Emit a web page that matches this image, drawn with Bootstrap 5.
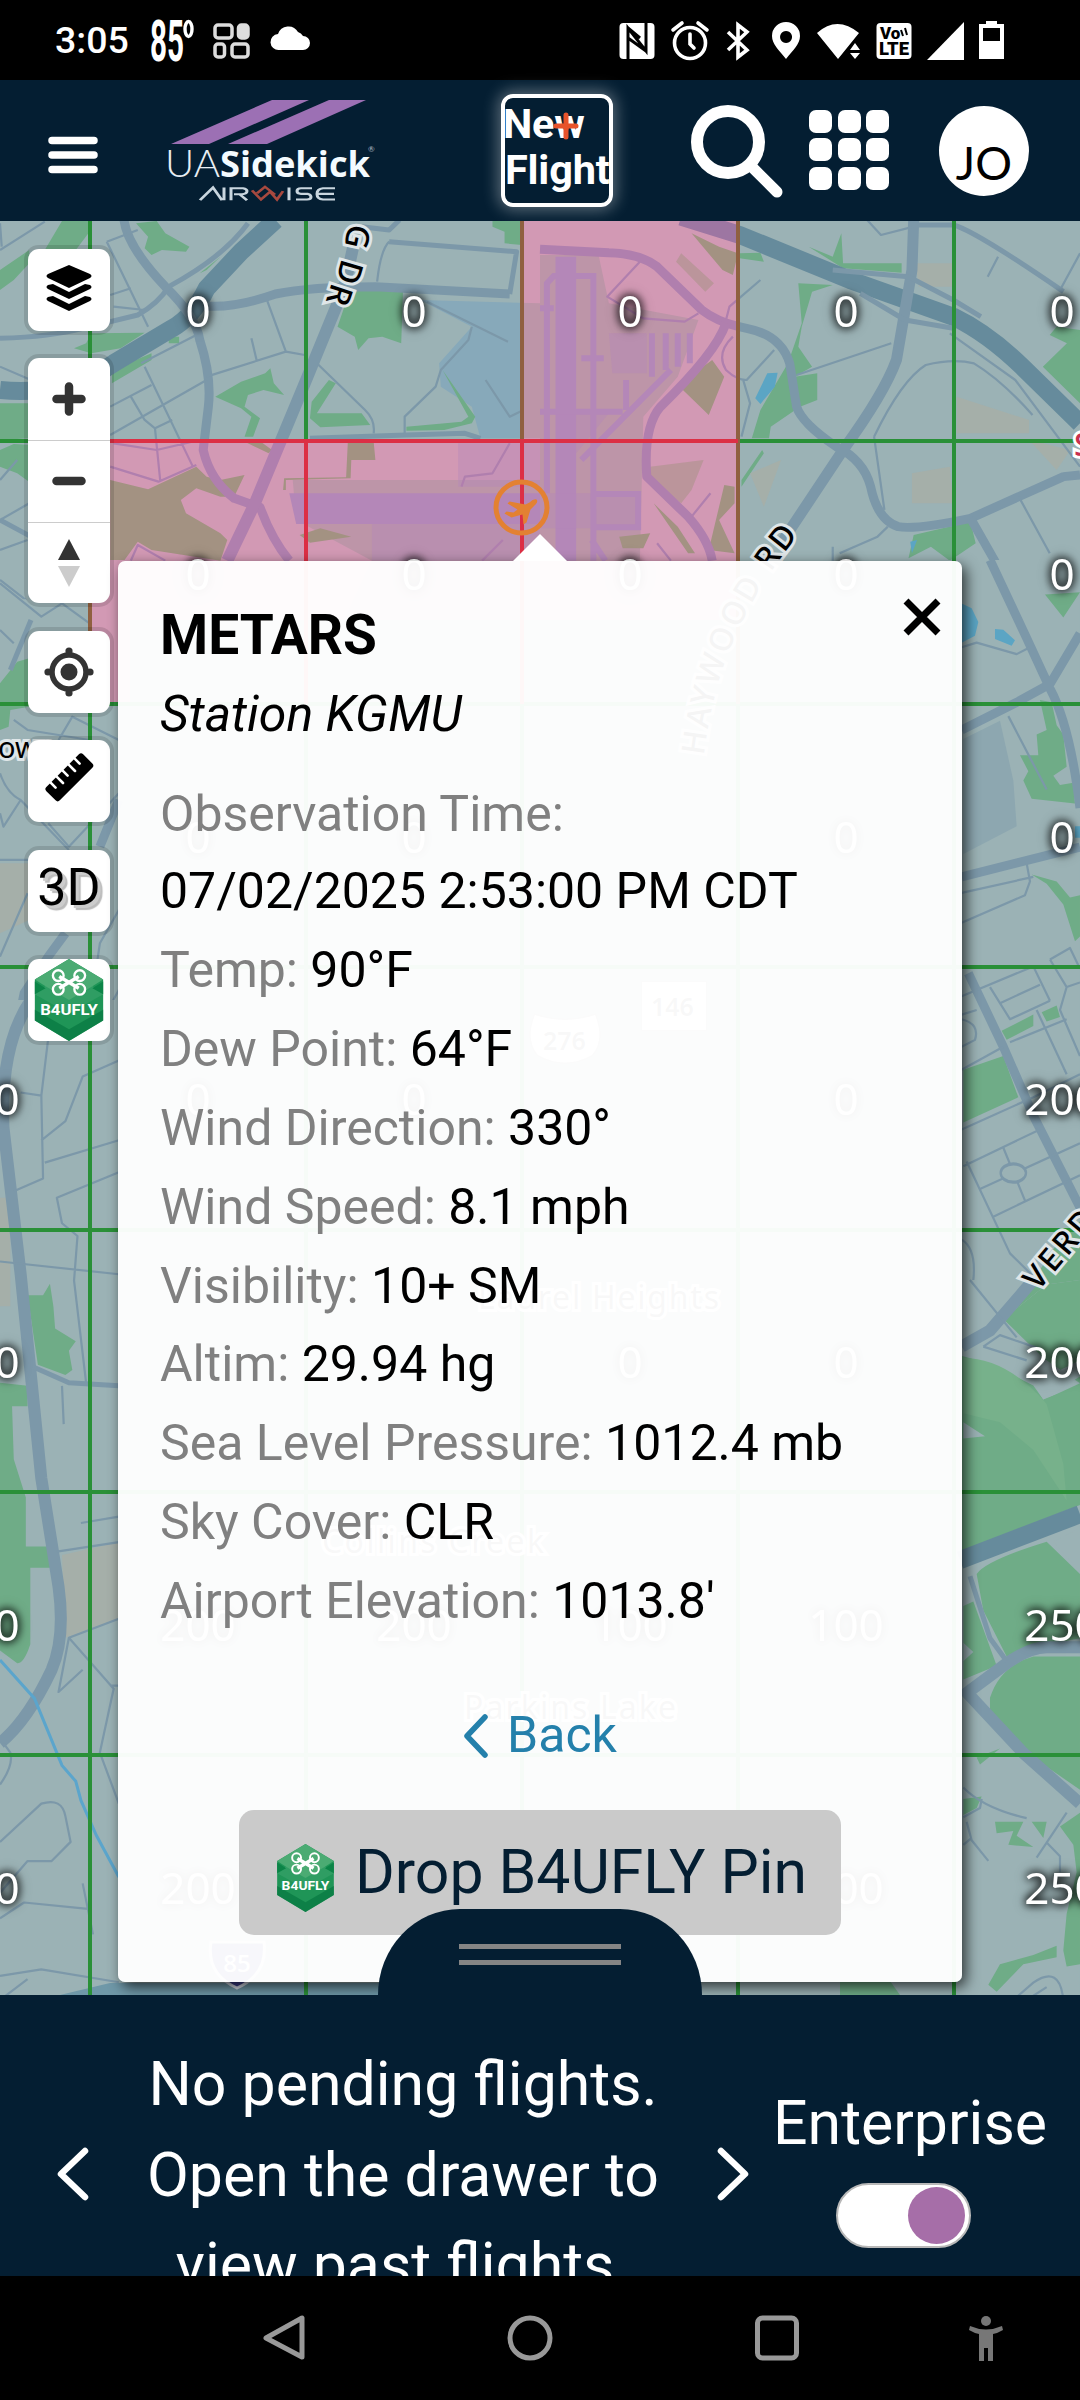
<!DOCTYPE html>
<html lang="en">
<head>
    <meta charset="UTF-8">
    <meta name="viewport" content="width=device-width, initial-scale=1.0">
    <title>UASidekick</title>
    <link href="https://cdn.jsdelivr.net/npm/bootstrap@5.3.0/dist/css/bootstrap.min.css" rel="stylesheet">
    <style>
        body {
            width: 1080px;
            height: 2400px;
            overflow: hidden;
            font-family: Roboto, sans-serif;
            background: #000;
            color: #000;
        }

        svg { display: block; flex: none; }

        /* phone bars */
        .status-bar { height: 80px; padding: 0 76px 0 55px; color: #fff; }
        .clock { font-size: 37.5px; font-weight: 500; line-height: 82px; width: 96px; }
        .phone-nav { height: 124px; }

        /* app header */
        .app-header { height: 141px; background: #041e32; padding-left: 48px; }
        .logo { margin-left: 70px; }
        .new-flight {
            width: 112px;
            height: 113px;
            margin: 0 0 0 126px;
            padding-top: 3px;
            border: 4px solid #fff;
            border-radius: 12px;
            box-shadow: 0 0 16px 3px rgba(255, 255, 255, .35);
            color: #fff;
            font-size: 41.5px;
            font-weight: 700;
            line-height: 46px;
            letter-spacing: -.2px;
            text-indent: -2px;
            white-space: nowrap;
        }
        .new-flight svg { left: 48px; top: 14px; }
        .search-icon { margin-left: 78px; }
        .apps-icon { margin-left: 25px; }
        .avatar {
            width: 90px;
            height: 90px;
            margin-left: 49px;
            background: #fff;
            font-family: Lato, sans-serif;
            font-size: 46px;
            line-height: 114px;
            text-align: center;
        }

        /* map */
        .map-area { height: 1774px; padding-left: 28px; background: #9bb2b5; }
        .map-canvas { left: 0; top: 0; }
        .map-path path, .map-canvas path { vector-effect: non-scaling-stroke; }
        .tone-green { --land: #9bb2b5; --road: #7c98a9; --hwy: #668b9c; --park: #6fac87; --field: #87a9ba; --runway: #87a9ba; }
        .tone-pink { --land: #d299b4; --road: #b07fae; --hwy: #9d76a2; --park: #a39282; --field: #bd95a8; --runway: #b487b8; }
        .land { fill: var(--land); }
        .park { fill: var(--park); }
        .field { fill: var(--field); }
        .runway { fill: var(--runway); }
        .taxi { fill: none; stroke: var(--runway); stroke-width: 6; }
        .hwy, .road, .street, .lane { fill: none; stroke: var(--road); stroke-linejoin: round; }
        .hwy { stroke: var(--hwy); stroke-width: 18; }
        .road { stroke-width: 9; }
        .street { stroke-width: 5; }
        .lane { stroke-width: 2.2; }
        .water { fill: #5ba5c4; }
        .creek { fill: none; stroke: #5ba5cc; stroke-width: 3; }
        .blush { fill: #a9aea4; opacity: .7; }
        .grid-green { fill: none; stroke: #2a9038; stroke-width: 4; }
        .grid-red { fill: none; stroke: #dc2f45; stroke-width: 4; }
        .grid-edge { fill: none; stroke: #8f6040; stroke-width: 4; }
        .alt-num {
            font: 44px "Noto Sans", sans-serif;
            fill: #fff;
            text-anchor: middle;
            filter: drop-shadow(0 0 4px rgba(0, 0, 0, .8)) drop-shadow(0 0 4px rgba(0, 0, 0, .8));
        }
        .place {
            font-family: "Noto Sans", sans-serif;
            font-size: 32px;
            font-weight: 500;
            fill: #000;
            stroke: #dfe6e8;
            stroke-width: 6;
            paint-order: stroke;
        }
        .place-town { font-weight: 400; fill: #555; stroke: #fff; }

        /* map tools */
        .tools { width: 82px; padding-top: 28px; gap: 27.7px; }
        .tool-box {
            height: 81.7px;
            background: #fff;
            border-radius: 11px;
            box-shadow: 0 0 0 4px rgba(0, 0, 0, .12);
        }
        .tool-zoom { height: 245px; }
        .tool-zoom > div { height: 81.7px; }
        .tool-zoom > div + div { border-top: 1.5px solid #ccc; }
        .label-3d { font-size: 52px; line-height: 76px; text-shadow: 3px 3px 0 #ccc, 5px 5px 1px #bbb; }

        /* station popup */
        .popup {
            width: 844px;
            height: 1421px;
            margin: 340px 0 0 8px;
            padding: 41px 42px 0;
            background: rgba(255, 255, 255, .96);
            border-radius: 7px;
            box-shadow: 4px 5px 14px rgba(0, 0, 0, .7);
        }
        .popup-tip { left: 395px; top: -27px; }
        .popup-close { right: 21px; top: 36px; }
        .popup h1 { font-size: 55px; font-weight: 700; line-height: 66px; margin: 0 0 7px; }
        .station { font-size: 50px; line-height: 79px; font-style: italic; margin-bottom: 23px; }
        .reading { font-size: 50px; line-height: 78.9px; white-space: nowrap; }
        .reading-label { color: #808080; }
        .reading-first { line-height: 75px; }
        .back-link { margin-top: 55px; font-size: 50px; line-height: 79px; color: #2480ab; gap: 18px; }
        .pin-btn {
            width: 602px;
            height: 125px;
            margin-top: 35px;
            padding: 0 0 0 37px;
            background: #cacaca;
            border-radius: 15px;
            font-size: 60.7px;
            color: #041e32;
            gap: 20px;
            white-space: nowrap;
        }
        .pin-btn svg { margin-top: 10px; }

        /* bottom drawer */
        .drawer { height: 281px; background: #041e32; color: #fff; font-size: 60.8px; }
        .drawer-tab {
            left: 378px;
            top: -86px;
            width: 324px;
            height: 90px;
            background: #041e32;
            border-radius: 82px 82px 0 0 / 86px 86px 0 0;
            padding-top: 35px;
            gap: 11px;
        }
        .drawer-tab div { width: 162px; height: 5px; background: #858585; }
        .drawer-msg { width: 560px; margin-left: 34px; padding-top: 45px; line-height: 90.7px; text-align: center; }
        .drawer-arrow { padding-top: 152px; width: 32px; }
        .arrow-left { margin-left: 57px; }
        .arrow-right { margin-left: 34px; }
        .mode { width: 270px; padding-top: 93px; margin-left: 26px; line-height: 72px; }
        .toggle {
            width: 135px;
            height: 65px;
            margin: 23px 13px 0 0;
            background: #fff;
            border: 2px solid #b8b8b8;
            border-radius: 33px;
            padding-right: 4px;
        }
        .toggle div { width: 57px; height: 57px; background: #a66ea8; }
    </style>
</head>
<body>

    <!-- shared drawings -->
    <svg width="0" height="0" class="map-path position-absolute">
        <defs>
            <symbol id="b4ufly" viewBox="0 0 72 84">
                <path fill="#1f9557" d="M36 0 71 21V63L36 84 1 63V21z"/>
                <path fill="#4bab73" d="M36 0 71 21 60 28 71 36 36 50 1 36 12 28 1 21z"/>
                <path fill="#2f9d63" d="M1 36 12 28 36 42 60 28 71 36 36 56z"/>
                <path fill="#087a41" d="M1 52 36 72 71 52V63L36 84 1 63z" opacity=".75"/>
                <path fill="#0b8447" d="M1 23 12 30 1 36zM71 23 60 30 71 36z"/>
                <g fill="none" stroke="#fff" stroke-width="2.4">
                    <circle cx="25" cy="17" r="5.5"/><circle cx="47" cy="17" r="5.5"/>
                    <circle cx="25" cy="31" r="5.5"/><circle cx="47" cy="31" r="5.5"/>
                    <path stroke-width="3.5" d="M26 18 46 30M46 18 26 30"/>
                </g>
                <text x="36" y="57" text-anchor="middle" textLength="59" lengthAdjust="spacingAndGlyphs" font-family="Roboto" font-weight="700" font-size="15" fill="#fff">B4UFLY</text>
            </symbol>

            <g id="tile-west">
                <path class="land" d="M0 0H1568V1200H0z"/>
                <path class="field" d="M1220 240 1568 250V655H1395L1370 560 1280 500 1275 430 1370 320zM850 780H1568V1200H1000L1080 1022 860 900z"/>
                <path class="runway" d="M840 820H1568V912H860z"/>
                <path class="runway" opacity=".4" d="M1330 670H1568V800H1330zM1080 912H1568V1022H1080z"/>
                <path class="park" d="M180 3H260V35L220 90H130zM395 10 455 3 480 40 550 80 540 95 470 90 440 105 420 85 430 50zM0 150 85 90V130L40 180 0 210zM0 550H85V655L0 660zM0 690 40 672 90 675V790L50 760 0 740zM265 340 420 338 350 385 265 400 215 385 250 370zM325 450 440 400V420L325 490zM1040 210 1170 215 1165 370 1110 350 1070 355 1040 390 1030 350 980 320 1000 260zM625 530 700 485 770 460 785 445 795 490 825 525 765 510 720 525 710 560 755 595 735 650H710L730 590 700 565zM905 545 955 480 975 490 920 580H1050L1075 615 930 622 900 595zM1285 450 1380 590 1370 610 1290 630 1180 632V620L1340 605 1360 590zM1430 3H1515V75L1465 70V35L1430 20zM580 160 640 110 600 150zM490 350H520V370H490z"/>
                <path class="park" d="M320 780 430 808 570 740 600 770 640 780 710 765 680 830H640L570 805 525 840 540 880 640 940 660 960 640 1022 440 990 400 965 360 1022H320zM1010 665H1085L1090 720H1020L1018 775 830 780V810H822L825 775 1005 772zM870 945 930 925 1020 950 900 968zM700 660H750L790 690 780 700z"/>
                <path class="hwy" d="M0 510Q90 520 180 500 260 480 330 430L500 325Q560 290 600 205L700 95 800 0"/>
                <path class="road" d="M360 0Q370 80 480 200 570 290 580 360 615 470 605 560L590 690Q610 780 680 835L755 862Q790 960 840 1022"/>
                <path class="road" d="M600 258Q680 265 800 222 900 200 1090 200L1480 222"/>
                <path class="road" style="stroke-width:12" d="M1030 60 1000 200Q940 350 885 490L740 850 660 1022"/>
                <path class="street" d="M0 355Q150 350 240 325L400 285Q460 250 490 200 650 110 720 10M1480 222 1500 95 1130 65M1050 20 1130 30 1160 0M0 900 90 950M900 655 1180 645 1350 640 1395 655"/>
                <path class="lane" d="M1130 65Q1105 90 1095 185M0 90 130 5M310 65 430 320M310 65 400 30M600 470 830 395 885 405M830 395 775 240M320 225 380 205M330 260 420 270M320 560 440 495M320 645 600 480M420 440 560 740M410 430 570 345M380 530 420 600 450 625 500 600M330 670 455 690 580 660M450 625 465 780M320 740 460 785 570 735M730 355 745 420M920 430 1060 570Q1090 600 1085 640M1240 245 1475 365M1370 320 1360 360 1280 450 1265 500 1175 590V640M1410 480 1480 590 1520 570M0 440 90 480M0 10 5 80M0 780 50 720M0 900 85 850M0 990 80 960M0 1080 100 1160 185 1150 260 1190M0 1200 90 1150M380 1022 400 975 480 1022M1340 800 1350 770 1430 760 1480 670M1400 1022 1460 960"/>
            </g>

            <g id="tile-east">
                <path class="land" d="M0 0H1568V1200H0z"/>
                <path class="field" d="M0 105 170 105 200 250 460 300 400 470 300 590 290 1022H0z"/>
                <path class="runway" d="M45 110H105V1022H45z"/>
                <path class="runway" opacity=".45" d="M200 340H310V460H210zM0 820H290V925H0zM105 580H200L105 700z"/>
                <path class="taxi" d="M20 600V190L40 168H155V1022M20 600V820M325 340V470M365 340V450M400 340V440M435 340V430M120 415H185M0 265H40M0 575H240M250 480V570M380 450 120 720M150 960 190 1022M155 822H285V922H155"/>
                <path class="park" d="M400 495 500 420 535 470 490 585zM440 40 520 80 575 100 560 165 530 150zM535 795 565 800V850L520 900 565 1000 490 990zM230 950 320 940 300 985H240zM330 850 400 920 450 1000 430 1000z"/>
                <path class="park" opacity=".5" d="M320 740 475 720 440 810 410 850 310 775zM410 100 505 190 480 215 395 125z"/>
                <path class="park" d="M580 100 640 98 650 125 580 115zM780 80 850 110 875 40 880 130 1050 130V158L880 145zM750 190 850 195 790 215 760 320 750 380 790 440 740 470 805 460V540L755 560 670 620 665 655H615L640 570 720 430 760 310zM1460 440 1530 370 1480 345 1500 320 1568 330V550zM1085 945 1250 905 1265 970 1190 1022 1135 980 1070 1015zM585 780 645 690 650 700 585 800zM1465 1120 1568 1110 1520 1190z"/>
                <path class="water" d="M625 535 660 460 690 458 682 500 640 552zM1075 965 1095 960 1080 1000zM1230 1150 1280 1200H1230z"/>
                <path class="blush" d="M1090 130H1200V200H1100zM1210 530 1300 560 1420 600V640H1210zM1080 760 1190 740 1200 850 1080 850zM610 760 700 720 650 860zM1420 660 1540 690 1500 750z"/>
                <path class="hwy" d="M410 -10 580 45 900 180 1200 290Q1300 340 1400 440L1568 610"/>
                <path class="road" d="M0 88 200 98Q290 100 340 140L470 270Q520 310 600 325 700 345 725 430L745 560Q760 610 860 680 940 720 960 800 980 900 1040 920 1090 930 1250 895L1520 770 1568 765"/>
                <path class="road" style="stroke-width:11" d="M1085 0 1080 150 1035 420Q1000 520 880 690L700 970"/>
                <path class="road" d="M540 310Q510 400 350 560 300 620 310 770L430 890Q490 960 500 1022M1250 895 1330 1040 1400 1200"/>
                <path class="street" d="M1085 15H1200Q1260 30 1520 215M850 150 1070 170 1200 240 1280 290M930 220 1060 300 1200 325"/>
                <path class="lane" d="M950 0 990 45 1085 20M970 650Q1050 480 1120 435 1200 415 1260 430 1340 480 1430 585M970 650 1000 870M1190 340 1380 480 1568 740M745 465 1020 370M540 300 550 260 640 180M290 125 195 230 300 295 420 305 460 280M560 350Q510 400 540 450 570 480 600 480L680 390M590 480 610 550 585 650M1330 110 1300 170M1568 100 1510 210M1390 830 1480 1000M850 980V1022M870 1000 980 950 1010 920M495 820 440 890M340 970 380 1022"/>
            </g>

            <clipPath id="pink-clip"><path d="M522 0H738V484H90V221H522z"/></clipPath>
        </defs>
    </svg>

    <div class="status-bar d-flex align-items-center">
        <div class="clock">3:05</div>
        <svg width="252" height="80" viewBox="151 0 252 80">
            <text x="150" y="61" textLength="34" lengthAdjust="spacingAndGlyphs" font-family="Roboto" font-weight="700" font-size="57" fill="#fff">85</text>
            <ellipse cx="188.500" cy="29" rx="3.500" ry="7.500" fill="none" stroke="#fff" stroke-width="3.400"/>
            <g fill="none" stroke="#ddd" stroke-width="3.500">
                <rect x="215" y="25" width="17" height="13" rx="3"/>
                <rect x="238.500" y="25" width="9.500" height="13" rx="3" fill="#ddd"/>
                <rect x="215" y="44" width="9.500" height="13" rx="3"/>
                <rect x="232" y="44" width="16" height="13" rx="3"/>
            </g>
            <path fill="#fff" d="M279 50a8 8 0 0 1-1-16 11 11 0 0 1 20-2 9 9 0 0 1 5 4 7 7 0 0 1 0 14z"/>
        </svg>
        <svg class="ms-auto" width="386" height="80" viewBox="618 0 386 80" fill="#fff">
            <rect x="619.500" y="23" width="35" height="36" rx="4"/>
            <path fill="none" stroke="#000" stroke-width="3" d="M628 60V28L646 51V23M628 38 646 51M628 28 640 38"/>
            <g fill="none" stroke="#fff" stroke-width="3.600" stroke-linecap="round">
                <circle cx="690" cy="43" r="15.500"/>
                <path d="M690 34V44L694 48M673 30 682 23M698 23 707 30"/>
                <path stroke-linecap="butt" d="M728 32 747 50 738 57V25L747 32 728 50"/>
            </g>
            <path fill-rule="evenodd" d="M786 59C779 50 772 44 772 36a14 14 0 0 1 28 0c0 8-7 14-14 23zM786 31a6 6 0 1 0 .1 0z"/>
            <path d="M817 33Q837 15 859 33L838 59zM850 50 855 43 860 50zM850 53H860L855 59z"/>
            <rect x="876.500" y="23" width="35" height="36" rx="4"/>
            <text x="880" y="39" font-family="Roboto" font-weight="900" font-size="17" fill="#000">Vo</text>
            <text x="879" y="55" font-family="Roboto" font-weight="900" font-size="17.500" textLength="30" lengthAdjust="spacingAndGlyphs" fill="#000">LTE</text>
            <path fill="none" stroke="#000" stroke-width="2" d="M901 30 903 36M905 28 907 35"/>
            <path d="M927 60 964 22V60z"/>
            <path d="M986 21H997V24H1004V59H979V24H986z"/>
            <path fill="#000" d="M983 28H1000V41H983z"/>
        </svg>
    </div>

    <header class="app-header d-flex align-items-center">
        <svg width="50" height="38" viewBox="0 0 50 38" class="mt-2" stroke="#fff" stroke-width="7.500" stroke-linecap="round"><path d="M4 4.500H46M4 19H46M4 33.500H46"/></svg>
        <svg class="logo" width="207" height="104" viewBox="168 99 207 104">
            <path fill="#9c70b4" d="M272 100H309L209 144H171zM329 100H366L267 144H228z"/>
            <text x="165" y="177" textLength="55" lengthAdjust="spacingAndGlyphs" font-family="Lato" font-weight="300" font-size="37" fill="#e8eef4">UA</text>
            <text x="220" y="177" textLength="150" lengthAdjust="spacingAndGlyphs" font-family="Open Sans" font-weight="700" font-size="36" fill="#f4fbff">Sidekick</text>
            <text x="368" y="152" font-family="Lato" font-size="8" fill="#b0bac4">®</text>
            <g transform="translate(0 56) scale(1 .7)" fill="none" stroke="#c9d6df" stroke-width="3">
                <path d="M200 206 213 188 222 206M224 188V206M231 206V189H243Q247 190 247 193 247 197 242 197.500H234M240 198 247 206M289 188V206M312 189H301Q297 189 297 193 297 197 301 197H308Q311 198 311 201.500 311 205 307 205H296M335 189H323Q317 190 317 197 317 204 323 205H335M318 197H334"/>
                <path stroke="#a8493f" d="M252 192 261 205 270 194 277 205 283 193M257 196 265 187 275 198"/>
            </g>
        </svg>
        <div class="new-flight position-relative">New<br>Flight
            <svg class="position-absolute" width="26" height="28" viewBox="0 0 26 28" stroke="#e8532b" stroke-width="5" stroke-linecap="round"><path d="M13 3V25M3 14H23"/></svg>
        </div>
        <svg class="search-icon" width="92" height="96" viewBox="0 0 92 96" fill="none" stroke="#fff" stroke-linecap="round"><circle cx="37" cy="39" r="31" stroke-width="12"/><path stroke-width="11" d="M61 64 86 89"/></svg>
        <svg class="apps-icon" width="82" height="82" viewBox="0 0 82 82" fill="#fff">
            <rect x="1" y="0" width="23" height="23" rx="7"/><rect x="30" y="0" width="23" height="23" rx="7"/><rect x="58" y="0" width="23" height="23" rx="7"/>
            <rect x="1" y="28" width="23" height="23" rx="7"/><rect x="30" y="28" width="23" height="23" rx="7"/><rect x="58" y="28" width="23" height="23" rx="7"/>
            <rect x="1" y="57" width="23" height="23" rx="7"/><rect x="30" y="57" width="23" height="23" rx="7"/><rect x="58" y="57" width="23" height="23" rx="7"/>
        </svg>
        <div class="avatar rounded-circle">JO</div>
    </header>

    <main class="map-area d-flex align-items-start position-relative">
        <svg class="map-canvas position-absolute tone-green" width="1080" height="1774" viewBox="0 221 1080 1774">
            <!-- top half -->
            <use href="#tile-west" transform="translate(0 220) scale(.3444 .3333)"/>
            <use href="#tile-east" transform="translate(540 220) scale(.3444 .3333)"/>
            <g class="tone-pink" clip-path="url(#pink-clip)" transform="translate(0 220)">
                <use href="#tile-west" transform="scale(.3444 .3333)"/>
                <use href="#tile-east" transform="translate(540 0) scale(.3444 .3333)"/>
            </g>

            <!-- left edge, two strips -->
            <g transform="translate(0 560) scale(.3444 .3333)">
                <path class="land" d="M0 118H345V1320H0z"/>
                <path class="park" d="M0 370 50 305 85 295V440L30 450 25 500 0 510z"/>
                <path class="blush" d="M0 910H85V1080L0 1120z"/>
                <path class="road" d="M345 720 290 860M190 1120 140 1190 70 1300 20 1560"/>
                <path class="street" d="M90 180 30 330"/>
                <path class="lane" d="M0 70 120 170 180 130 260 190M0 210 40 250M40 480 80 510 260 540M170 540 210 470 345 540M0 640Q20 700 60 720L200 870M60 720 10 800 0 760M140 790 200 860 345 700M0 900H85M345 1050 290 1150 280 1220M0 1190 80 1000M345 1290 200 1560M140 1450 130 1560M280 1530 345 1500"/>
            </g>
            <g transform="translate(0 1000) scale(.3444 .6378)">
                <path class="land" d="M0 0H345V1568H0z"/>
                <path class="park" d="M80 463H125L145 445 155 480 160 515 220 535 200 550 210 580 190 588 110 572zM0 600 80 605V637H35L40 720 75 780V857H165V890H88V1010Q70 1040 50 1040L0 1020z"/>
                <path class="blush" d="M0 310H30V480H0zM180 870 345 850V970L190 1000z"/>
                <path class="road" style="stroke-width:12" d="M90 0Q0 70 10 200L60 430 120 750 170 920Q190 1000 150 1050 80 1130 0 1165"/>
                <path class="street" d="M95 575 200 600 345 605"/>
                <path class="lane" d="M140 60 120 150 125 280 40 300M140 60 150 0M120 220 190 190 240 120 345 95M60 145 120 150M130 255 345 220M345 270 165 310 180 350 225 370 215 440 250 600M0 410 345 430M180 605 185 665M235 820 345 810M165 865 345 850M345 970 200 1000 170 1085 240 1050M200 1000 330 1080 290 1180 345 1260M320 1075H345M0 1230Q40 1200 30 1180L10 1165M0 1320 120 1260Q180 1250 190 1280L205 1320 150 1350H80L0 1400M0 1440 70 1415 255 1425M270 1465 240 1385M0 1530 120 1520 345 1540M0 1568 80 1535"/>
                <path class="creek" d="M0 1035 100 1095 180 1200 220 1225 235 1255 280 1310 345 1375"/>
            </g>

            <!-- right edge, two strips -->
            <g transform="translate(900 560) scale(.3333 .4592)">
                <path class="land" d="M0 0H540V1568H0z"/>
                <path fill="#8da7b0" d="M190 390 300 350 340 480 350 580 190 640z"/>
                <path class="water" d="M185 95 215 105 235 135 225 165 185 180zM285 150 310 152 345 175 335 187 285 172zM525 580H540V605H525z"/>
                <path class="park" d="M435 75 540 70 490 125zM420 305 455 310 470 360 490 380 500 450 460 470 480 490 520 485 525 530 395 520 370 480 385 460 360 425 415 425 410 380 440 370zM395 685 470 700 510 735 540 730V820L525 830 490 750 440 705zM305 1025 400 990V1015L320 1045zM425 985 470 970 480 995 440 1005zM190 1110 310 1080 355 1170 190 1225zM400 1568 470 1490 540 1440V1568z"/>
                <path class="road" d="M270 0 380 170 450 280Q510 360 540 540M540 160 450 270 350 310 185 370M185 690 540 625M205 900 310 1060 400 1210 540 1410"/>
                <path class="lane" d="M185 190 230 180 350 205 390 190M325 340 440 500M185 725 400 690M380 660 390 700 375 730 185 790M185 950 400 885 450 960M270 930 330 1000 450 960M300 965 420 925M185 990 230 980M450 870 510 845 540 890M450 870 500 930 540 920M500 930 480 980 540 1080M410 980 500 1120M330 1050 500 1000M185 1110 310 1060M185 1240 400 1170 540 1120M190 1320 420 1240M240 1370 540 1270M280 1430 540 1340M200 1310 330 1510 400 1560M310 1280 375 1395M185 1480Q230 1500 220 1568M185 1000Q240 1010 225 1045L185 1060"/>
                <ellipse cx="340" cy="1335" rx="38" ry="20" class="land" stroke="#7c98a9" stroke-width="7"/>
            </g>
            <g transform="translate(900 1280) scale(.3333 .4592)">
                <path class="land" d="M0 0H540V1568H0z"/>
                <path class="park" d="M400 0H540V230L430 260 400 230 320 200 190 170V580L540 480V0L440 10 310 85 380 125 330 60zM230 640Q260 610 440 570L540 640V780L400 800 320 820 250 720zM190 710 220 700 290 840 190 870zM270 910Q300 840 400 820H540V1110L400 1040 270 940zM190 1130 245 1125 230 1150 190 1165zM285 1180H370L350 1210 400 1235 325 1230 340 1200 290 1205zM395 1180H440L430 1215zM480 1190 540 1160V1490L500 1495 490 1460 500 1380 530 1290 520 1230zM230 1040 300 1020 240 1055zM265 1535 300 1490 400 1470 470 1450V1475L370 1490 290 1550z"/>
                <path fill="#6fac87" d="M185 165 300 190 430 262 540 225V490L185 590zM310 85 440 10 540 0V225L430 170z"/>
                <path fill="#77b18b" d="M190 170Q320 170 440 270L490 400 500 480 400 370 300 310 190 290z"/>
                <path fill="#9bb2b5" d="M190 310 255 340 190 345zM190 790 220 810 190 830zM400 225 540 175V210L430 260zM460 570 540 540V635z"/>
                <path class="hwy" d="M180 610 540 510"/>
                <path class="road" style="stroke-width:12" d="M185 145 270 110 400 0M190 905 320 835Q390 800 440 800H540M190 890 370 1030 540 1140"/>
                <path class="street" d="M210 645 270 780 320 830"/>
                <path class="lane" d="M210 0 350 125M250 145 300 120 420 150M250 145 380 175M190 1105Q250 1150 380 1172M190 1170 240 1150 245 1130M200 1180 215 1220 265 1265M190 1230 215 1215M410 1258 500 1160M440 1225 480 1255V1290M340 1568 400 1530Q480 1490 490 1568M380 1568 440 1540"/>
            </g>
            <path fill="#6f98a8" d="M110 1983H380V1995H60z"/>
            <path class="park" d="M840 1981H890L900 1995H840z"/>

            <path fill="#d299b4" d="M90 560H130V704H90z"/>

            <!-- ceiling grid -->
            <path class="grid-green" d="M90 221V1995M306 221V441M306 704V1995M522 704V1995M738 704V1995M954 221V1995M0 441H90M738 441H1080M0 704H1080M0 967H1080M0 1230H1080M0 1492H1080M0 1755H1080"/>
            <path class="grid-edge" d="M522 221V441M738 221V704M90 441V704"/>
            <path class="grid-red" d="M90 441H738M306 441V704M522 441V704"/>

            <!-- labels -->
            <g class="place">
                <text transform="translate(349 223) rotate(102)">G</text>
                <text transform="translate(342 258) rotate(106)">D</text>
                <text transform="translate(332 282) rotate(108)">R</text>
                <path id="haywood" fill="none" stroke="none" d="M704 756Q713 680 742 622T812 520"/>
                <text letter-spacing="3"><textPath href="#haywood">HAYWOOD RD</textPath></text>
                <text transform="translate(1038 1292) rotate(-50)" letter-spacing="4">VERDAE</text>
                <text x="-2" y="758" style="font-size:29px;font-weight:400">own</text>
                <text x="1074" y="456" style="fill:#c9304f;stroke:#fff">S</text>
            </g>
            <g class="place place-town">
                <text x="478" y="1309" textLength="241">Laurel Heights</text>
                <text x="322" y="1553" textLength="222">Collins Creek</text>
                <text x="464" y="1719" textLength="212">Parkins Lake</text>
                <path fill="#fff" stroke="#888" style="fill:#fff;stroke:#999;stroke-width:3" d="M642 982H706V1030H642zM535 1015Q565 1025 595 1015 605 1040 592 1055 565 1070 538 1055 525 1040 535 1015z"/>
                <text x="651" y="1016" style="font-size:25px;font-weight:600">146</text>
                <text x="543" y="1050" style="font-size:25px;font-weight:600">276</text>
            </g>
            <path fill="#3c3f8c" stroke="#d5dce8" stroke-width="3" d="M211 1942H264Q268 1974 237 1988 206 1974 211 1942z"/>
            <text x="237" y="1972" class="place" text-anchor="middle" style="fill:#fff;stroke:none;font-size:24px">85</text>

            <g class="alt-num">
                <text x="198" y="327">0</text><text x="414" y="327">0</text><text x="630" y="327">0</text><text x="846" y="327">0</text><text x="1062" y="327">0</text>
                <text x="198" y="590">0</text><text x="414" y="590">0</text><text x="630" y="590">0</text><text x="846" y="590">0</text><text x="1062" y="590">0</text>
                <text x="198" y="853">0</text><text x="414" y="853">0</text><text x="846" y="853">0</text><text x="1062" y="853">0</text>
                <text x="-18" y="1115">200</text><text x="198" y="1115">0</text><text x="414" y="1115">0</text><text x="846" y="1115">0</text><text x="1062" y="1115">200</text>
                <text x="-18" y="1378">200</text><text x="630" y="1378">0</text><text x="846" y="1378">0</text><text x="1062" y="1378">200</text>
                <text x="-18" y="1641">200</text><text x="198" y="1641">200</text><text x="414" y="1641">200</text><text x="630" y="1641">100</text><text x="846" y="1641">100</text><text x="1062" y="1641">250</text>
                <text x="-18" y="1904">200</text><text x="198" y="1904">200</text><text x="846" y="1904">200</text><text x="1062" y="1904">250</text>
            </g>

            <!-- airport marker -->
            <g transform="translate(521.500 507.500)">
                <circle r="25.500" fill="none" stroke="#e38132" stroke-width="5"/>
                <path fill="#e38132" d="M15-8Q12-9 8-5L4-3-12-6-14-4-4 2-8 5-15 4-17 6-10 10-3 8 1 7 2 17 5 15 9 2 14-3Q17-6 15-8z"/>
            </g>
        </svg>

        <div class="tools d-flex flex-column position-relative">
            <div class="tool-box d-flex align-items-center justify-content-center">
                <svg class="mb-1" width="46" height="48" viewBox="0 0 46 48"><path d="M23 1 44 10Q47 12 44 14L23 24 2 14Q-1 12 2 10zM2 21 7 20 23 28 39 20 44 21Q47 23 44 25L23 35 2 25Q-1 23 2 21zM2 33 7 32 23 40 39 32 44 33Q47 35 44 37L23 47 2 37Q-1 35 2 33z"/></svg>
            </div>
            <div class="tool-box tool-zoom">
                <div class="d-flex align-items-center justify-content-center"><svg width="34" height="34" viewBox="0 0 34 34" stroke="#333" stroke-width="8.500" stroke-linecap="round"><path d="M17 4.500V29.500M4.500 17H29.500"/></svg></div>
                <div class="d-flex align-items-center justify-content-center"><svg width="34" height="34" viewBox="0 0 34 34" stroke="#333" stroke-width="8.500" stroke-linecap="round"><path d="M4.500 17H29.500"/></svg></div>
                <div class="d-flex align-items-center justify-content-center"><svg width="22" height="48" viewBox="0 0 22 48"><path fill="#333" d="M11 0 22 21H0z"/><path fill="#ccc" d="M0 27H22L11 48z"/></svg></div>
            </div>
            <div class="tool-box d-flex align-items-center justify-content-center">
                <svg width="50" height="50" viewBox="0 0 50 50" fill="#333"><circle cx="25" cy="25" r="17" fill="none" stroke="#333" stroke-width="5.500"/><circle cx="25" cy="25" r="8.500"/><circle cx="25" cy="4" r="3.600"/><circle cx="25" cy="46" r="3.600"/><circle cx="4" cy="25" r="3.600"/><circle cx="46" cy="25" r="3.600"/></svg>
            </div>
            <div class="tool-box d-flex align-items-center justify-content-center">
                <svg width="50" height="50" viewBox="0 0 50 50" class="mb-2"><g transform="rotate(-45 25 25)"><rect x="-1" y="16" width="52" height="19" rx="3"/><path stroke="#fff" stroke-width="2.600" stroke-linecap="round" d="M8 15V23M16.500 15V25M25 15V23M33.500 15V25M42 15V23"/></g></svg>
            </div>
            <div class="tool-box label-3d text-center">3D</div>
            <div class="tool-box d-flex align-items-center justify-content-center">
                <svg width="72" height="82"><use href="#b4ufly" width="72" height="82"/></svg>
            </div>
        </div>

        <section class="popup position-relative">
            <svg class="popup-tip position-absolute" width="54" height="27" viewBox="0 0 54 27"><path fill="#fff" d="M27 0 54 27H0z"/></svg>
            <svg class="popup-close position-absolute" width="38" height="40" viewBox="0 0 38 40" stroke="#000" stroke-width="7"><path d="M3 4 35 36M35 4 3 36"/></svg>
            <h1>METARS</h1>
            <div class="station">Station KGMU</div>
            <div class="reading reading-first"><span class="reading-label">Observation Time:</span></div>
            <div class="reading">07/02/2025 2:53:00 PM CDT</div>
            <div class="reading"><span class="reading-label">Temp:</span> 90°F</div>
            <div class="reading"><span class="reading-label">Dew Point:</span> 64°F</div>
            <div class="reading"><span class="reading-label">Wind Direction:</span> 330°</div>
            <div class="reading"><span class="reading-label">Wind Speed:</span> 8.1 mph</div>
            <div class="reading"><span class="reading-label">Visibility:</span> 10+ SM</div>
            <div class="reading"><span class="reading-label">Altim:</span> 29.94 hg</div>
            <div class="reading"><span class="reading-label">Sea Level Pressure:</span> 1012.4 mb</div>
            <div class="reading"><span class="reading-label">Sky Cover:</span> CLR</div>
            <div class="reading"><span class="reading-label">Airport Elevation:</span> 1013.8'</div>
            <div class="back-link d-flex align-items-center justify-content-center">
                <svg width="26" height="44" viewBox="0 0 26 44" fill="none" stroke="#2480ab" stroke-width="5.500" stroke-linecap="round" stroke-linejoin="round"><path d="M22 3 4 22 22 41"/></svg>
                <span>Back</span>
            </div>
            <div class="pin-btn d-flex align-items-center mx-auto">
                <svg width="59" height="68"><use href="#b4ufly" width="59" height="68"/></svg>
                <span>Drop B4UFLY Pin</span>
            </div>
        </section>
    </main>

    <section class="drawer position-relative">
        <div class="drawer-tab position-absolute d-flex flex-column align-items-center"><div></div><div></div></div>
        <div class="d-flex h-100 overflow-hidden position-relative">
            <div class="drawer-arrow arrow-left">
                <svg width="32" height="54" viewBox="0 0 32 54" fill="none" stroke="#fff" stroke-width="6.500" stroke-linecap="round" stroke-linejoin="round"><path d="M28 4 4 27 28 50"/></svg>
            </div>
            <div class="drawer-msg">No pending flights.<br>Open the drawer to<br>view past flights.</div>
            <div class="drawer-arrow arrow-right">
                <svg width="32" height="54" viewBox="0 0 32 54" fill="none" stroke="#fff" stroke-width="6.500" stroke-linecap="round" stroke-linejoin="round"><path d="M4 4 28 27 4 50"/></svg>
            </div>
            <div class="mode d-flex flex-column align-items-center">
                <div>Enterprise</div>
                <div class="toggle d-flex align-items-center justify-content-end"><div class="rounded-circle"></div></div>
            </div>
        </div>
    </section>

    <div class="phone-nav">
        <svg width="1080" height="124" viewBox="0 2276 1080 124" fill="none" stroke="#999" stroke-width="5" stroke-linejoin="round">
            <path d="M302 2318V2357L266 2338z"/>
            <circle cx="530" cy="2338" r="20"/>
            <rect x="757.500" y="2318" width="39" height="40" rx="5"/>
            <g fill="#777" stroke="none">
                <circle cx="986" cy="2321" r="5"/>
                <path d="M970 2326Q986 2333 1002 2326L1003 2330Q998 2333 993 2334V2361H988V2348H984V2361H979V2334Q974 2333 969 2330z"/>
            </g>
        </svg>
    </div>

    <script src="https://cdn.jsdelivr.net/npm/bootstrap@5.3.0/dist/js/bootstrap.bundle.min.js"></script>
</body>
</html>
